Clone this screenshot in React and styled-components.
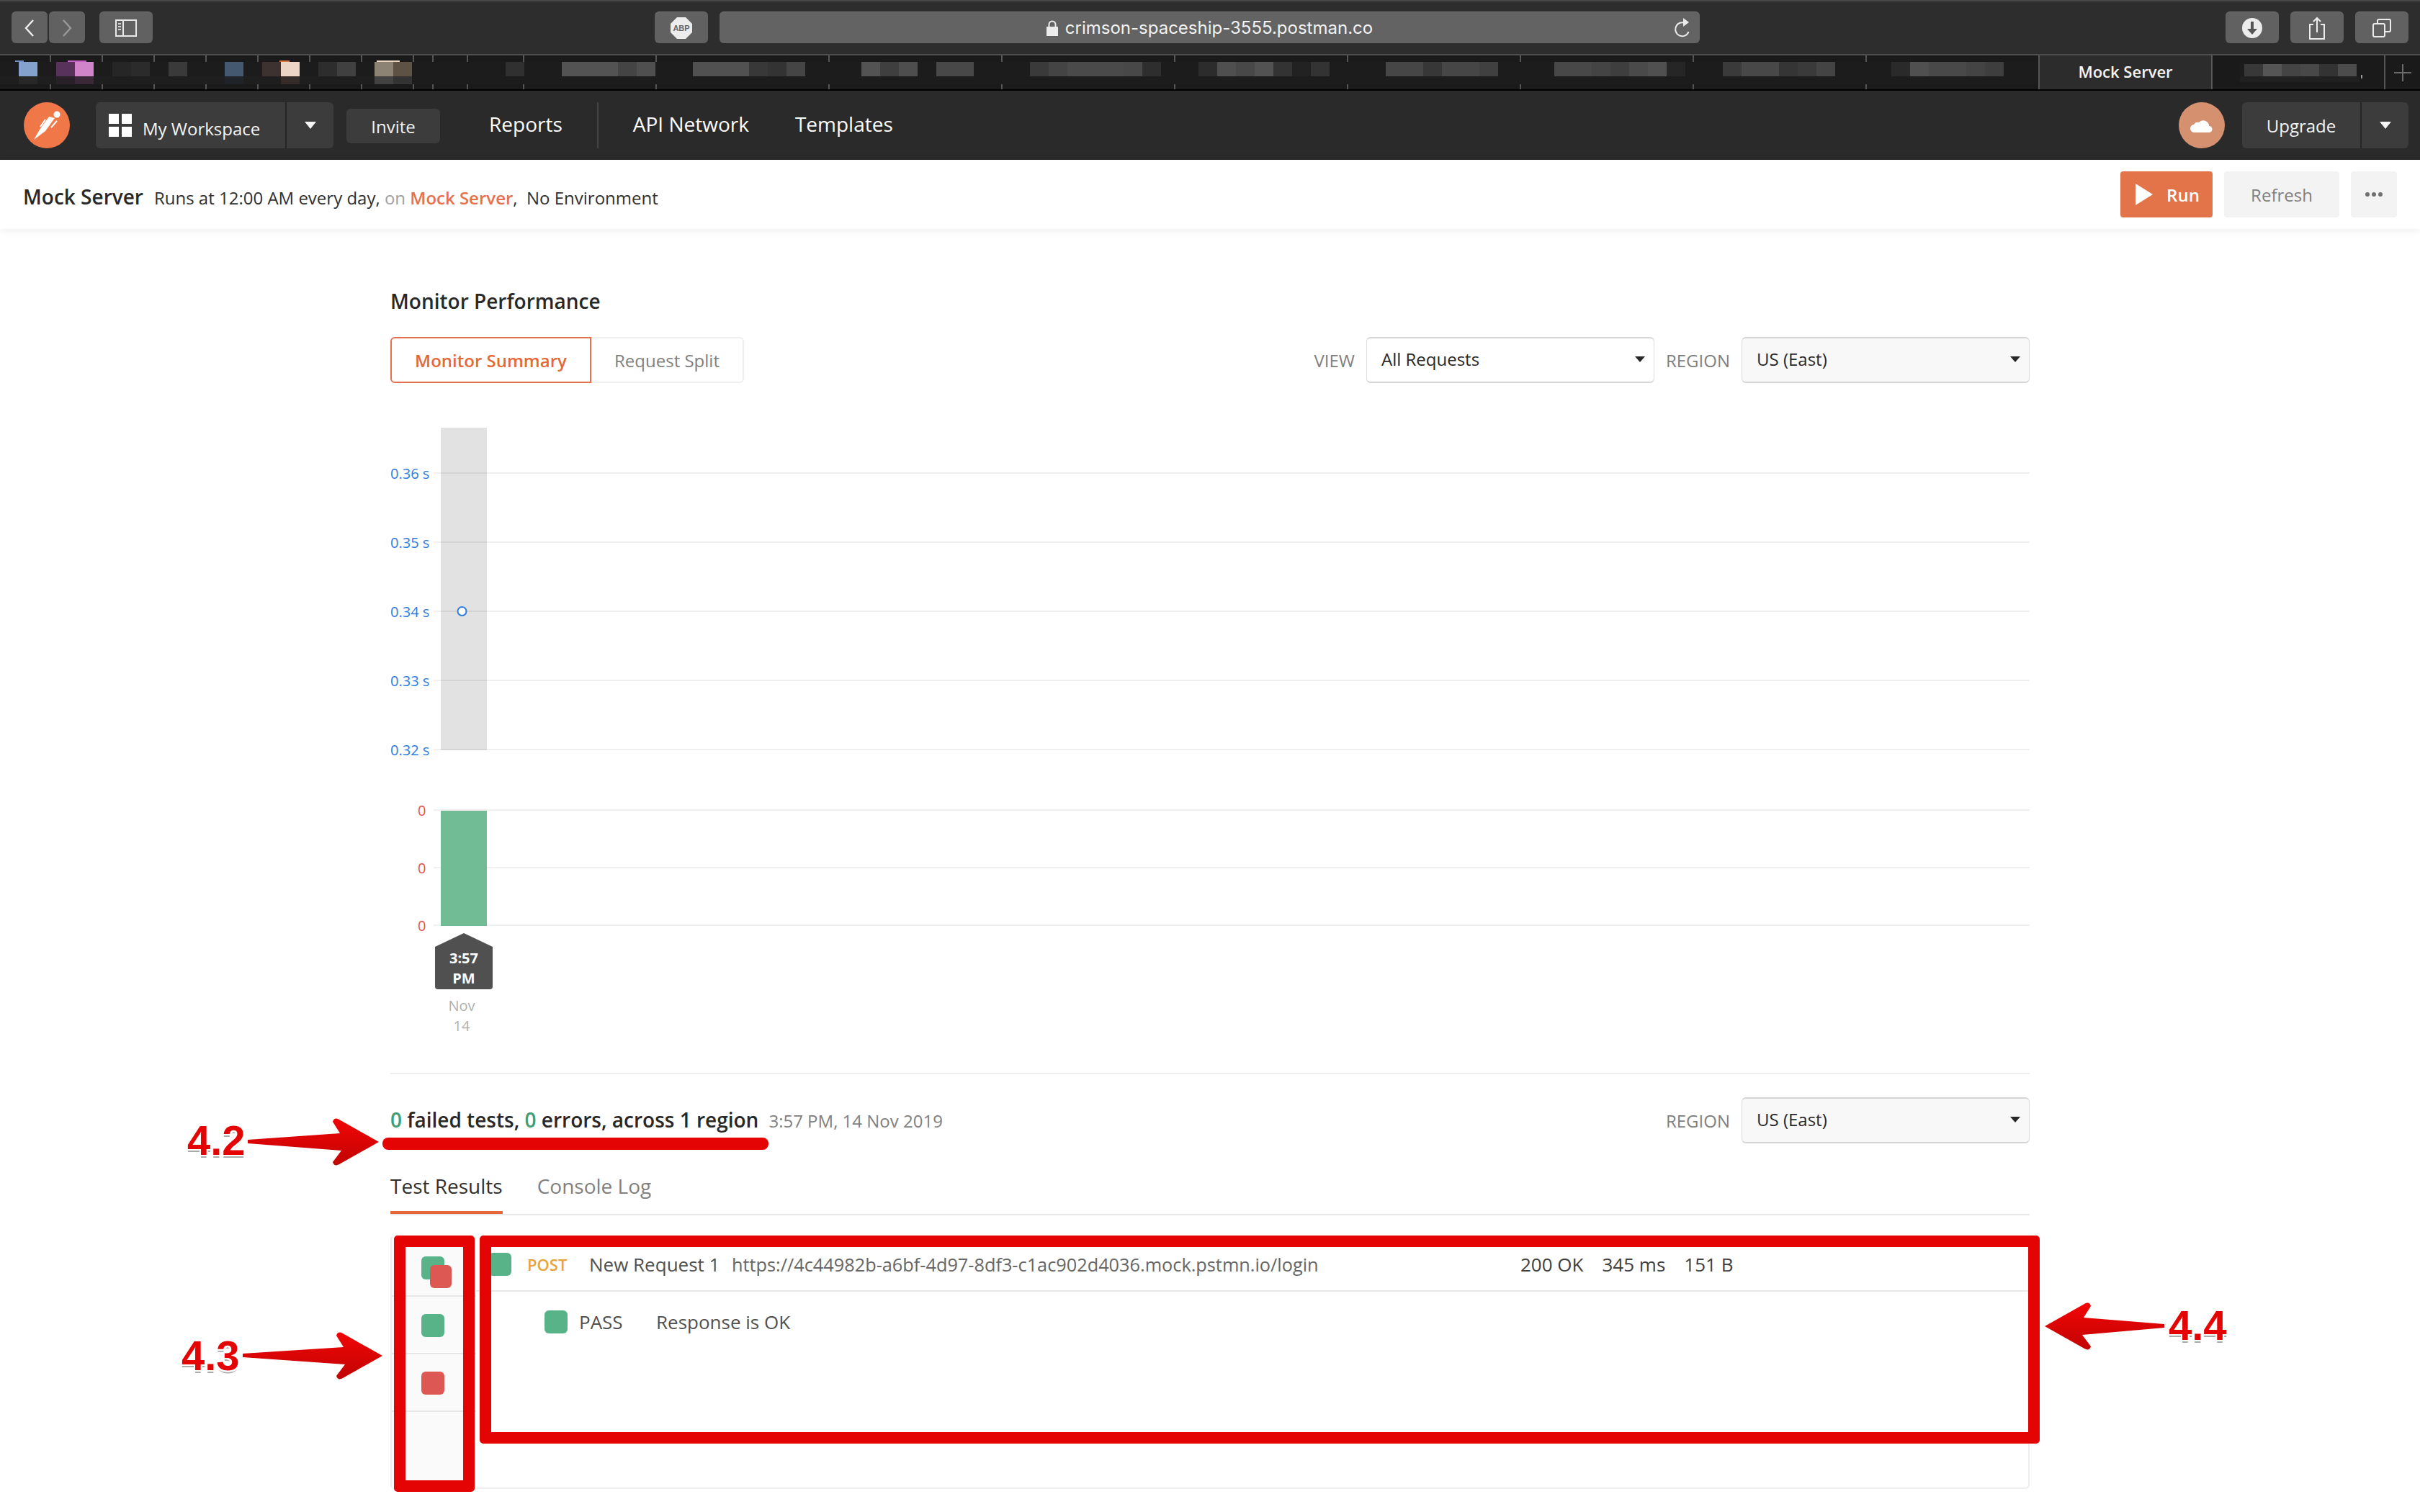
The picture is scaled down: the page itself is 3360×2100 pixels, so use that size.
import React from "react";
import styled, { createGlobalStyle } from "styled-components";

const Global = createGlobalStyle`
  html, body { margin: 0; padding: 0; background: #fff; }
  body { font-family: "Open Sans", "Liberation Sans", sans-serif; color: #282828; }
  * { box-sizing: border-box; }
`;

const Page = styled.div`
  position: relative;
  width: 3360px;
  height: 2100px;
  overflow: hidden;
  background: #fff;
`;

/* ---------- browser chrome ---------- */
const Toolbar = styled.div`
  height: 75px;
  background: #2d2d2d;
  border-top: 2px solid #484848;
  display: flex;
  align-items: flex-start;
  padding: 14px 16px 0;
`;
const ChromeButton = styled.div`
  width: ${(p) => p.$w}px;
  height: 44px;
  margin-left: ${(p) => p.$ml || 0}px;
  background: #616161;
  border-top: 1px solid #757575;
  border-radius: 6px;
  display: flex;
  align-items: center;
  justify-content: center;
  flex: none;
`;
const UrlBar = styled.div`
  width: 1361px;
  height: 44px;
  margin-left: 16px;
  margin-right: auto;
  background: #636363;
  border-top: 1px solid #7a7a7a;
  border-radius: 6px;
  display: flex;
  align-items: center;
  justify-content: center;
  gap: 10px;
  position: relative;
  color: #f2f2f2;
  font: 400 24px Inter, "Liberation Sans", sans-serif;
`;
const Reload = styled.svg`
  position: absolute;
  right: 12px;
  top: 8px;
`;

const TabStrip = styled.div`
  position: relative;
  height: 51px;
  background: #1a1a1a;
  border-top: 2px solid #4d4d4d;
  border-bottom: 2px solid #000;
  display: flex;
`;
const TabCell = styled.div`
  width: ${(p) => p.$w}px;
  flex: none;
  border-right: 2px solid #555;
  background: ${(p) => (p.$active ? "#2c2c2c" : "transparent")};
  color: #f5f5f5;
  font-size: 22px;
  font-weight: 600;
  padding-bottom: 3px;
  display: flex;
  align-items: center;
  justify-content: center;
`;
const PlusIcon = styled.div`
  flex: 1;
  display: flex;
  align-items: center;
  justify-content: center;
`;
const Mosaic = styled.div`
  position: absolute;
  left: ${(p) => p.$left}px;
  top: ${(p) => p.$top}px;
  height: ${(p) => p.$h}px;
  display: flex;
`;
const Block = styled.span`
  display: block;
  flex: none;
  width: ${(p) => p.$w}px;
  height: 100%;
  background: ${(p) => p.$c};
`;

/* ---------- postman nav ---------- */
const NavBar = styled.div`
  height: 96px;
  background: #2a2a2a;
  display: flex;
  align-items: center;
  padding: 0 16px 0 33px;
  color: #fff;
`;
const Logo = styled.svg`
  flex: none;
  margin-right: 36px;
`;
const SplitButton = styled.div`
  width: ${(p) => p.$w}px;
  height: 64px;
  display: flex;
  background: #3c3c3c;
  border-radius: 6px;
  flex: none;
`;
const SplitMain = styled.div`
  width: ${(p) => p.$w}px;
  display: flex;
  align-items: center;
  justify-content: ${(p) => (p.$center ? "center" : "flex-start")};
  padding-left: ${(p) => (p.$center ? 0 : 18)}px;
  gap: 15px;
  border-right: 2px solid #262626;
  font-size: 24px;
  color: #f5f5f5;
`;
const SplitCaret = styled.div`
  flex: 1;
  display: flex;
  align-items: center;
  justify-content: center;
`;
const WorkspaceLabel = styled.span`
  position: relative;
  top: 4px;
`;
const GridIcon = styled.div`
  display: grid;
  grid-template-columns: 14px 14px;
  grid-auto-rows: 14px;
  gap: 4px;
  span { background: #fff; }
`;
const Caret = styled.span`
  display: block;
  width: 0;
  height: 0;
  border-left: ${(p) => p.$s}px solid transparent;
  border-right: ${(p) => p.$s}px solid transparent;
  border-top: ${(p) => p.$t}px solid ${(p) => p.$c};
`;
const InviteButton = styled.div`
  width: 130px;
  height: 48px;
  margin: 2px 0 0 18px;
  border-radius: 6px;
  background: #3c3c3c;
  color: #f0f0f0;
  font-size: 24px;
  display: flex;
  align-items: center;
  justify-content: center;
  flex: none;
`;
const NavLink = styled.div`
  font-size: 28px;
  color: #fff;
  margin-left: ${(p) => p.$ml}px;
  position: relative;
  top: -2px;
  flex: none;
`;
const NavDivider = styled.div`
  width: 2px;
  height: 64px;
  background: #444;
  margin-left: 48px;
  flex: none;
`;
const Avatar = styled.div`
  width: 64px;
  height: 64px;
  margin-left: auto;
  margin-right: 24px;
  border-radius: 50%;
  background: #d5906f;
  display: flex;
  align-items: center;
  justify-content: center;
  flex: none;
`;

/* ---------- monitor bar ---------- */
const MonitorBar = styled.div`
  position: relative;
  height: 96px;
  background: #fff;
  box-shadow: 0 2px 12px rgba(0, 0, 0, 0.08);
  display: flex;
  align-items: center;
  padding: 0 32px;
`;
const MonitorName = styled.div`
  font-size: 28px;
  font-weight: 600;
  color: #282828;
  margin-right: 15px;
  position: relative;
  top: 3px;
`;
const MonitorMeta = styled.div`
  font-size: 24px;
  color: #303030;
  white-space: pre;
  position: relative;
  top: 4px;
`;
const Muted = styled.span`
  color: #a0a0a0;
`;
const Accent = styled.span`
  color: #e5714a;
  font-weight: 600;
`;
const BarActions = styled.div`
  margin-left: auto;
  display: flex;
  gap: 16px;
`;
const ActionButton = styled.div`
  height: 64px;
  width: ${(p) => p.$w}px;
  padding-left: ${(p) => (p.$primary ? 3 : 0)}px;
  border-radius: 4px;
  background: ${(p) => (p.$primary ? "#e37349" : "#f3f3f3")};
  color: ${(p) => (p.$primary ? "#fff" : "#808080")};
  font-size: 24px;
  font-weight: ${(p) => (p.$primary ? 600 : 400)};
  display: flex;
  align-items: center;
  justify-content: center;
  gap: 19px;
`;
const Dots = styled.div`
  display: flex;
  gap: 3px;
  span { width: 6px; height: 6px; border-radius: 50%; background: #6f6f6f; }
`;

/* ---------- main ---------- */
const Main = styled.main`
  width: 2276px;
  margin: 0 auto;
  padding-top: 80px;
`;
const SectionTitle = styled.h2`
  margin: 0;
  font-size: 28px;
  line-height: 40px;
  font-weight: 600;
  color: #282828;
`;
const ControlRow = styled.div`
  display: flex;
  align-items: center;
  margin-top: ${(p) => p.$mt}px;
  height: 64px;
`;
const Segment = styled.div`
  height: 64px;
  display: flex;
  align-items: center;
  justify-content: center;
  width: ${(p) => p.$w}px;
  font-size: 24px;
  border-radius: ${(p) => (p.$active ? "6px 0 0 6px" : "0 6px 6px 0")};
  border: 2px solid ${(p) => (p.$active ? "#e5714a" : "#eeeeee")};
  border-left-width: ${(p) => (p.$active ? 2 : 0)}px;
  color: ${(p) => (p.$active ? "#e5683a" : "#808080")};
  font-weight: ${(p) => (p.$active ? 600 : 400)};
  margin-right: ${(p) => (p.$last ? "auto" : 0)};
`;
const FieldLabel = styled.div`
  font-size: 24px;
  color: #808080;
  margin: 0 16px 0 ${(p) => p.$ml || 0}px;
`;
const Select = styled.div`
  width: ${(p) => p.$w}px;
  height: 64px;
  padding: 0 12px 3px 20px;
  background: ${(p) => (p.$shade ? "#f8f8f8" : "#fff")};
  border: 1px solid #dcdcdc;
  border-top: 2px solid #d4d4d4;
  border-bottom: 2px solid #d4d4d4;
  border-radius: 6px;
  font-size: 24px;
  color: #282828;
  display: flex;
  align-items: center;
  justify-content: space-between;
  flex: none;
`;
const Chart = styled.svg`
  display: block;
  margin-top: 62px;
`;
const ChartText = styled.text`
  font-family: "Open Sans", "Liberation Sans", sans-serif;
  font-size: 20px;
  fill: ${(p) => p.$c};
  font-weight: ${(p) => p.$weight || 400};
  text-anchor: ${(p) => p.$anchor || "start"};
`;
const Rule = styled.div`
  height: 2px;
  margin-top: 46px;
  background: #eeeeee;
`;
const Summary = styled.div`
  font-size: 28px;
  font-weight: 600;
  color: #282828;
  margin-right: 14px;
  position: relative;
  top: -1px;
`;
const Good = styled.span`
  color: #3f9d73;
`;
const Timestamp = styled.div`
  font-size: 24px;
  color: #808080;
  margin-right: auto;
`;
const Tabs = styled.div`
  margin-top: 30px;
  height: 70px;
  display: flex;
  gap: 48px;
  border-bottom: 2px solid #e8e8e8;
`;
const TabItem = styled.div`
  height: 68px;
  font-size: 28px;
  line-height: 58px;
  color: ${(p) => (p.$active ? "#303030" : "#808080")};
  border-bottom: 4px solid ${(p) => (p.$active ? "#e5683a" : "transparent")};
  padding-bottom: 4px;
`;
const ResultsPanel = styled.div`
  margin-top: 30px;
  height: 350px;
  display: flex;
  border: 2px solid #eeeeee;
  border-top: none;
  border-radius: 0 0 6px 6px;
`;
const RunList = styled.div`
  width: 117px;
  flex: none;
  background: #fafafa;
  padding-top: 3px;
`;
const RunItem = styled.div`
  position: relative;
  height: 80px;
  padding: 24px 0 0 41px;
  border-bottom: 2px solid #e8e8e8;
`;
const Square = styled.div`
  width: 32px;
  height: 32px;
  border-radius: 6px;
  background: ${(p) => (p.$fail ? "#dd5753" : "#58b488")};
  flex: none;
`;
const OverlapSquare = styled(Square)`
  position: absolute;
  left: 53px;
  top: 36px;
  width: 30px;
`;
const ResultBody = styled.div`
  flex: 1;
  min-width: 0;
`;
const RequestRow = styled.div`
  height: 76px;
  padding: 2px 0 0 17px;
  display: flex;
  align-items: center;
  border-bottom: 2px solid #e8e8e8;
  font-size: 26px;
  color: #505050;
  white-space: nowrap;
`;
const Method = styled.div`
  margin: 0 31px 0 22px;
  width: 55px;
  font-size: 22px;
  font-weight: 600;
  color: #e8a33d;
`;
const RequestName = styled.div`
  width: 198px;
  flex: none;
`;
const RequestUrl = styled.div`
  width: 1095px;
  flex: none;
  color: #666;
  font-size: 25.3px;
`;
const Metric = styled.div`
  margin-right: 26px;
  color: #404040;
`;
const AssertionRow = styled.div`
  display: flex;
  align-items: center;
  padding: 24px 0 0 95px;
  font-size: 26px;
  color: #505050;
`;
const AssertionState = styled.div`
  width: 107px;
  margin-left: 16px;
`;

/* ---------- annotations over the page ---------- */
const Stroke = styled.div`
  position: absolute;
  left: ${(p) => p.$x}px;
  top: ${(p) => p.$y}px;
  width: ${(p) => p.$w}px;
  height: ${(p) => p.$h}px;
  border: ${(p) => p.$b}px solid #e50404;
  border-radius: 5px;
`;
const Underline = styled.div`
  position: absolute;
  left: 531px;
  top: 1580px;
  width: 536px;
  height: 17px;
  background: #e50404;
  border-radius: 8px;
`;
const Callout = styled.div`
  position: absolute;
  left: ${(p) => p.$x}px;
  top: ${(p) => p.$y}px;
  font: 700 58px/58px "Liberation Sans", sans-serif;
  color: #e50404;
  text-shadow: 2px 0 #fff, -2px 0 #fff, 0 -2px #fff, 0 2px #fff, 2px 2px #fff, -2px 2px #fff, 2px -2px #fff, -2px -2px #fff, 0 4px #aaa;
`;
const ArrowSvg = styled.svg`
  position: absolute;
  left: ${(p) => p.$x}px;
  top: ${(p) => p.$y}px;
  transform: ${(p) => (p.$flip ? "scaleX(-1)" : "none")};
`;

const topBlocks = [
  [26, 26, "#84a0cc"], [78, 26, "#58325a"], [104, 26, "#d184c9"], [156, 26, "#262626"], [182, 26, "#2b2b2b"],
  [234, 26, "#3a3a3a"], [312, 26, "#44596f"], [364, 26, "#3d3230"], [390, 26, "#ecd4c6"], [442, 26, "#2d2d2d"],
  [468, 26, "#404040"], [520, 26, "#8d8375"], [546, 26, "#5e5245"], [702, 26, "#303030"],
  [780, 78, "#535353"], [858, 26, "#444444"], [884, 26, "#4f4f4f"], [962, 78, "#515151"], [1040, 26, "#383838"],
  [1066, 26, "#333333"], [1092, 26, "#454545"], [1196, 26, "#535353"], [1222, 26, "#3f3f3f"], [1248, 26, "#4e4e4e"],
  [1300, 52, "#484848"], [1430, 26, "#3a3a3a"], [1456, 26, "#444444"], [1482, 78, "#4a4a4a"], [1560, 26, "#484848"],
  [1586, 26, "#2e2e2e"], [1664, 26, "#2c2c2c"], [1690, 26, "#4f4f4f"], [1716, 26, "#484848"], [1742, 26, "#525252"],
  [1768, 26, "#333333"], [1794, 26, "#222222"], [1820, 26, "#333333"], [1924, 52, "#464646"], [1976, 26, "#373737"],
  [2002, 52, "#464646"], [2054, 26, "#404040"], [2158, 52, "#484848"], [2210, 26, "#444444"], [2236, 26, "#3e3e3e"],
  [2262, 26, "#4a4a4a"], [2288, 26, "#505050"], [2314, 26, "#262626"], [2392, 26, "#3a3a3a"], [2418, 52, "#484848"],
  [2470, 26, "#353535"], [2496, 26, "#3a3a3a"], [2522, 26, "#444444"], [2626, 26, "#2a2a2a"], [2652, 26, "#505050"],
  [2678, 52, "#494949"], [2730, 26, "#444444"], [2756, 26, "#3e3e3e"],
];
const lowBlocks = [
  [26, 26, "#272727"], [78, 26, "#2a2028"], [104, 26, "#3a2838"], [312, 26, "#20242a"], [390, 26, "#352b28"],
  [520, 26, "#424242"], [546, 26, "#333333"],
];
const peekBlocks = [[21, 12, "#7090c8"], [94, 26, "#c860c8"], [388, 14, "#d97a45"], [523, 32, "#e8d8c0"]];
const lastBlocks = [
  [3116, 26, "#383838"], [3142, 26, "#555555"], [3168, 26, "#444444"], [3194, 26, "#484848"], [3220, 26, "#333333"], [3246, 26, "#4c4c4c"],
];

const fill = (list, start, base) => {
  const out = [];
  let x = start;
  list.forEach(([bx, w, c]) => {
    if (bx > x) out.push([bx - x, base]);
    out.push([w, c]);
    x = bx + w;
  });
  return out;
};

const MosaicRow = ({ list, top, h, left = 0, base }) => (
  <Mosaic $left={left} $top={top} $h={h}>
    {fill(list, left, base).map(([w, c], i) => (
      <Block key={i} $w={w} $c={c} />
    ))}
  </Mosaic>
);

const BigArrow = ({ x, y, w, flip }) => (
  <ArrowSvg $x={x} $y={y} $flip={flip} width={w} height="68" viewBox={`0 0 ${w} 68`}>
    <defs>
      <linearGradient id={`ag${x}`} x1="0" y1="0" x2="0" y2="1">
        <stop offset="0" stopColor="#f20505" />
        <stop offset="1" stopColor="#c10404" />
      </linearGradient>
    </defs>
    <path
      d={`M0 31 L${w - 54} 22 L${w - 64} 6 Q${w - 62} -1 ${w - 55} 3 L${w} 34 L${w - 55} 65 Q${w - 62} 69 ${w - 64} 62 L${w - 52} 46 L0 36 Z`}
      fill={`url(#ag${x})`}
    />
  </ArrowSvg>
);

const tabWidths = [71, 72, 72, 72, 72, 72, 72, 72, 27, 48, 78, 184, 240, 240, 240, 240, 240, 240, 240, 240];

const yTicks = [
  ["0.36 s", 63],
  ["0.35 s", 159],
  ["0.34 s", 255],
  ["0.33 s", 351],
  ["0.32 s", 447],
];
const errTicks = [531, 611, 691];

export default function App() {
  return (
    <Page>
      <Global />
      <Toolbar>
        <ChromeButton $w={50}>
          <svg width="16" height="26" viewBox="0 0 16 26"><path d="M13 2 3 13l10 11" fill="none" stroke="#f0f0f0" strokeWidth="2.4" /></svg>
        </ChromeButton>
        <ChromeButton $w={50} $ml={2}>
          <svg width="16" height="26" viewBox="0 0 16 26"><path d="M3 2l10 11L3 24" fill="none" stroke="#9a9a9a" strokeWidth="2.4" /></svg>
        </ChromeButton>
        <ChromeButton $w={74} $ml={20}>
          <svg width="30" height="24" viewBox="0 0 30 24">
            <rect x="1" y="1" width="28" height="22" fill="none" stroke="#e8e8e8" strokeWidth="2" />
            <path d="M11 1v22" stroke="#e8e8e8" strokeWidth="2" />
            <path d="M4 6h4M4 10h4M4 14h4" stroke="#d0d0d0" strokeWidth="2" />
          </svg>
        </ChromeButton>
        <ChromeButton $w={74} $ml={697}>
          <svg width="32" height="32" viewBox="0 0 32 32">
            <path d="M10 1h12l9 9v12l-9 9H10l-9-9V10z" fill="#ececec" />
            <text x="16" y="20" textAnchor="middle" fontFamily="Liberation Sans" fontWeight="700" fontSize="11" fill="#666">ABP</text>
          </svg>
        </ChromeButton>
        <UrlBar>
          <svg width="16" height="22" viewBox="0 0 16 22">
            <rect y="9" width="16" height="13" fill="#ececec" />
            <path d="M3.5 10V6a4.5 4.5 0 0 1 9 0v4" fill="none" stroke="#ececec" strokeWidth="2" />
          </svg>
          crimson-spaceship-3555.postman.co
          <Reload width="24" height="27" viewBox="0 0 24 27">
            <path d="M14 6.5A9.5 9.5 0 1 0 21.5 16" fill="none" stroke="#ececec" strokeWidth="2" transform="rotate(20 12 15)" />
            <path d="M13 0l8 6-8 6z" fill="#ececec" />
          </Reload>
        </UrlBar>
        <ChromeButton $w={74}>
          <svg width="28" height="28" viewBox="0 0 28 28">
            <circle cx="14" cy="14" r="14" fill="#ececec" />
            <path d="M12 5h4v10h5l-7 8-7-8h5z" fill="#555" />
          </svg>
        </ChromeButton>
        <ChromeButton $w={74} $ml={16}>
          <svg width="22" height="32" viewBox="0 0 22 32">
            <path d="M6 11H1v20h20V11h-5" fill="none" stroke="#ececec" strokeWidth="2" />
            <path d="M11 22V2M6 7l5-5 5 5" fill="none" stroke="#ececec" strokeWidth="2" />
          </svg>
        </ChromeButton>
        <ChromeButton $w={74} $ml={16}>
          <svg width="26" height="26" viewBox="0 0 26 26">
            <rect x="1" y="7" width="16" height="18" rx="2" fill="none" stroke="#ececec" strokeWidth="2" />
            <path d="M7 7V3a2 2 0 0 1 2-2h14a2 2 0 0 1 2 2v13a2 2 0 0 1-2 2h-6" fill="none" stroke="#ececec" strokeWidth="2" />
          </svg>
        </ChromeButton>
      </Toolbar>

      <TabStrip>
        {tabWidths.map((w, i) => (
          <TabCell key={i} $w={w} />
        ))}
        <TabCell $w={240} $active>Mock Server</TabCell>
        <TabCell $w={240} />
        <PlusIcon>
          <svg width="24" height="24" viewBox="0 0 24 24"><path d="M12 0v24M0 12h24" stroke="#6a6a6a" strokeWidth="2" /></svg>
        </PlusIcon>
        <MosaicRow list={[[0, 2828, "#1c1c1c"]]} top={9} h={31} base="#1c1c1c" />
        <MosaicRow list={topBlocks} top={9} h={20} base="#1c1c1c" />
        <MosaicRow list={lowBlocks} top={29} h={11} base="#1e1e1e" />
        <MosaicRow list={peekBlocks} top={7} h={2} base="transparent" />
        <MosaicRow list={[[3110, 166, "#202020"]]} left={3110} top={29} h={8} base="transparent" />
        <MosaicRow list={lastBlocks} left={3110} top={12} h={17} base="#1c1c1c" />
        <MosaicRow list={[[3278, 2, "#999999"]]} left={3278} top={27} h={5} base="transparent" />
      </TabStrip>

      <NavBar>
        <Logo width="64" height="64" viewBox="0 0 64 64">
          <circle cx="32" cy="32" r="32" fill="#ef7748" />
          <circle cx="46" cy="17" r="4.5" fill="#fff" />
          <path d="M43 22 30 40 14 52l8-14 13-18z" fill="#fff" />
          <path d="M30 24l-7 10M46 26l-8 9" stroke="#fff" strokeWidth="2" fill="none" />
        </Logo>
        <SplitButton $w={330}>
          <SplitMain $w={265}>
            <GridIcon><span /><span /><span /><span /></GridIcon>
            <WorkspaceLabel>My Workspace</WorkspaceLabel>
          </SplitMain>
          <SplitCaret><Caret $s={8} $t={10} $c="#f5f5f5" /></SplitCaret>
        </SplitButton>
        <InviteButton>Invite</InviteButton>
        <NavLink $ml={68}>Reports</NavLink>
        <NavDivider />
        <NavLink $ml={48}>API Network</NavLink>
        <NavLink $ml={64}>Templates</NavLink>
        <Avatar>
          <svg width="32" height="20" viewBox="0 0 32 20">
            <path d="M6 20a5.5 5.5 0 0 1-1-11 6 6 0 0 1 7-3 8 8 0 0 1 14 5 4.5 4.5 0 0 1 0 9z" fill="#fff" />
          </svg>
        </Avatar>
        <SplitButton $w={231}>
          <SplitMain $w={166} $center>Upgrade</SplitMain>
          <SplitCaret><Caret $s={8} $t={10} $c="#f5f5f5" /></SplitCaret>
        </SplitButton>
      </NavBar>

      <MonitorBar>
        <MonitorName>Mock Server</MonitorName>
        <MonitorMeta>
          Runs at 12:00 AM every day, <Muted>on</Muted> <Accent>Mock Server</Accent>,  No Environment
        </MonitorMeta>
        <BarActions>
          <ActionButton $primary $w={128}>
            <svg width="24" height="30" viewBox="0 0 24 30"><path d="M0 0l24 15L0 30z" fill="#fff" /></svg>
            Run
          </ActionButton>
          <ActionButton $w={160}>Refresh</ActionButton>
          <ActionButton $w={64}><Dots><span /><span /><span /></Dots></ActionButton>
        </BarActions>
      </MonitorBar>

      <Main>
        <SectionTitle>Monitor Performance</SectionTitle>
        <ControlRow $mt={30}>
          <Segment $active $w={279}>Monitor Summary</Segment>
          <Segment $last $w={212}>Request Split</Segment>
          <FieldLabel>VIEW</FieldLabel>
          <Select $w={400}>All Requests<Caret $s={7} $t={8} $c="#282828" /></Select>
          <FieldLabel $ml={16}>REGION</FieldLabel>
          <Select $w={400} $shade>US (East)<Caret $s={7} $t={8} $c="#282828" /></Select>
        </ControlRow>

        <Chart width="2276" height="850" viewBox="0 0 2276 850">
          <rect x="70" y="0" width="64" height="448" fill="#e2e2e2" />
          {yTicks.map(([label, y]) => (
            <g key={label}>
              <path d={`M60 ${y}H2276`} stroke="#000" strokeOpacity="0.06" strokeWidth="2" />
              <ChartText x="0" y={y + 8} $c="#2f7de1">{label}</ChartText>
            </g>
          ))}
          <circle cx="99.5" cy="255" r="6" fill="#fff" stroke="#2f7de1" strokeWidth="2" />
          {errTicks.map((y) => (
            <g key={y}>
              <path d={`M60 ${y}H2276`} stroke="#f0f0f0" strokeWidth="2" />
              <ChartText x="38" y={y + 8} $c="#e0544a">0</ChartText>
            </g>
          ))}
          <rect x="70" y="532" width="64" height="160" fill="#72bc95" />
          <path d="M102 702l40 19v55a4 4 0 0 1-4 4H66a4 4 0 0 1-4-4v-55z" fill="#505050" />
          <ChartText x="102" y="744" $c="#fff" $weight={700} $anchor="middle">3:57</ChartText>
          <ChartText x="102" y="772" $c="#fff" $weight={700} $anchor="middle">PM</ChartText>
          <ChartText x="99" y="810" $c="#b0b0b0" $anchor="middle">Nov</ChartText>
          <ChartText x="99" y="838" $c="#b0b0b0" $anchor="middle">14</ChartText>
        </Chart>

        <Rule />

        <ControlRow $mt={32}>
          <Summary><Good>0</Good> failed tests, <Good>0</Good> errors, across 1 region</Summary>
          <Timestamp>3:57 PM, 14 Nov 2019</Timestamp>
          <FieldLabel>REGION</FieldLabel>
          <Select $w={400} $shade>US (East)<Caret $s={7} $t={8} $c="#282828" /></Select>
        </ControlRow>

        <Tabs>
          <TabItem $active>Test Results</TabItem>
          <TabItem>Console Log</TabItem>
        </Tabs>

        <ResultsPanel>
          <RunList>
            <RunItem><Square /><OverlapSquare $fail /></RunItem>
            <RunItem><Square /></RunItem>
            <RunItem><Square $fail /></RunItem>
          </RunList>
          <ResultBody>
            <RequestRow>
              <Square />
              <Method>POST</Method>
              <RequestName>New Request 1</RequestName>
              <RequestUrl>https://4c44982b-a6bf-4d97-8df3-c1ac902d4036.mock.pstmn.io/login</RequestUrl>
              <Metric>200 OK</Metric>
              <Metric>345 ms</Metric>
              <Metric>151 B</Metric>
            </RequestRow>
            <AssertionRow>
              <Square />
              <AssertionState>PASS</AssertionState>
              <div>Response is OK</div>
            </AssertionRow>
          </ResultBody>
        </ResultsPanel>
      </Main>

      <Underline />
      <Stroke $x={547} $y={1716} $w={112} $h={356} $b={16} />
      <Stroke $x={666} $y={1716} $w={2166} $h={289} $b={16} />
      <Callout $x={260} $y={1555}>4.2</Callout>
      <BigArrow x={344} y={1552} w={182} />
      <Callout $x={252} $y={1854}>4.3</Callout>
      <BigArrow x={337} y={1849} w={194} />
      <BigArrow x={2839} y={1808} w={166} flip />
      <Callout $x={3011} $y={1812}>4.4</Callout>
    </Page>
  );
}
